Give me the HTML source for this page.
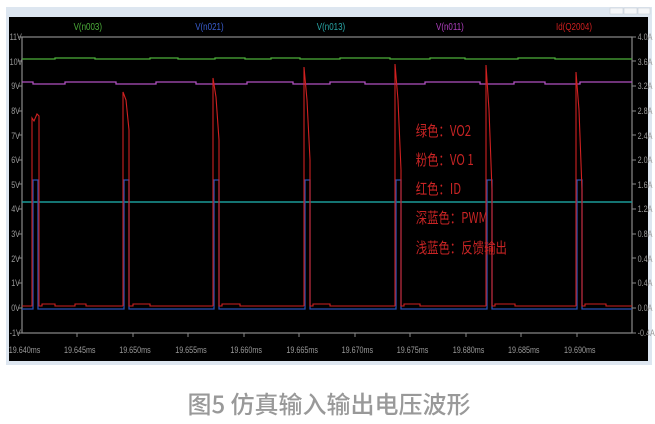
<!DOCTYPE html>
<html><head><meta charset="utf-8"><style>
body{margin:0;width:655px;height:424px;background:#fff;overflow:hidden;font-family:"Liberation Sans","Noto Sans CJK SC",sans-serif}
</style></head><body>
<svg width="655" height="424" viewBox="0 0 655 424" xmlns="http://www.w3.org/2000/svg" style="position:absolute;left:0;top:0">
<rect x="6" y="7" width="646" height="358" fill="#dde6f0"/>
<rect x="9" y="17" width="639" height="344" fill="#000"/>
<rect x="610" y="8" width="13" height="6" fill="#f4f6f8" stroke="#c8d0d8" stroke-width="0.6"/>
<rect x="624" y="8" width="13" height="6" fill="#f4f6f8" stroke="#c8d0d8" stroke-width="0.6"/>
<rect x="638" y="8" width="12" height="6" fill="#f4f6f8" stroke="#c8d0d8" stroke-width="0.6"/>
<rect x="22" y="37" width="610" height="296" fill="none" stroke="#8a8a8a" stroke-width="1.2"/>
<g font-family="Liberation Sans Narrow,Liberation Sans,sans-serif" font-size="9" fill="#9a9a9a" transform="scale(0.8,1)">
<text x="12" y="40">11V</text><text x="12" y="65">10V</text><text x="14" y="89">9V</text><text x="14" y="114">8V</text><text x="14" y="139">7V</text><text x="14" y="163">6V</text><text x="14" y="188">5V</text><text x="14" y="212">4V</text><text x="14" y="237">3V</text><text x="14" y="262">2V</text><text x="14" y="286">1V</text><text x="14" y="311">0V</text><text x="12" y="336">-1V</text>
<text x="797" y="40">4.0A</text><text x="797" y="65">3.6A</text><text x="797" y="89">3.2A</text><text x="797" y="114">2.8A</text><text x="797" y="139">2.4A</text><text x="797" y="163">2.0A</text><text x="797" y="188">1.6A</text><text x="797" y="212">1.2A</text><text x="797" y="237">0.8A</text><text x="797" y="262">0.4A</text><text x="797" y="286">0.4A</text><text x="797" y="311">0.0A</text><text x="797" y="336">-0.4A</text>
<text x="11" y="353">19.640ms</text><text x="80" y="353">19.645ms</text><text x="149" y="353">19.650ms</text><text x="219" y="353">19.655ms</text><text x="288" y="353">19.660ms</text><text x="358" y="353">19.665ms</text><text x="427" y="353">19.670ms</text><text x="496" y="353">19.675ms</text><text x="566" y="353">19.680ms</text><text x="635" y="353">19.685ms</text><text x="705" y="353">19.690ms</text>
</g>
<g stroke="#8a8a8a" stroke-width="1">
<path d="M18 37h4M18 61h4M18 86h4M18 111h4M18 135h4M18 160h4M18 184h4M18 209h4M18 234h4M18 258h4M18 283h4M18 308h4M18 333h4"/>
<path d="M632 37h4M632 61h4M632 86h4M632 111h4M632 135h4M632 160h4M632 184h4M632 209h4M632 234h4M632 258h4M632 283h4M632 308h4M632 333h4"/>
<path d="M77 333v4M133 333v4M188 333v4M244 333v4M299 333v4M355 333v4M410 333v4M466 333v4M521 333v4M577 333v4"/>
</g>
<g font-family="Liberation Sans Narrow,Liberation Sans,sans-serif" font-size="10" transform="scale(0.8,1)">
<text x="92" y="30" fill="#4caf3a">V(n003)</text>
<text x="244" y="30" fill="#3a5ed0">V(n021)</text>
<text x="396" y="30" fill="#2aa8a8">V(n013)</text>
<text x="545" y="30" fill="#b040c0">V(n011)</text>
<text x="695" y="30" fill="#d02020">Id(Q2004)</text>
</g>
<path d="M22 59H55V58H95V59H150V58H178V59H215V58H245V59H271V58H300V59H340V58H390V59H430V58H465V59H518V58H555V59H632" stroke="#4caf3a" stroke-width="1.3" fill="none"/>
<path d="M22 82H33V84H65V82H116V84H156V82H196V84H247V82H293V84H330V82H365V84H425V82H480V84H514V82H545V84H580V82H632" stroke="#b050c0" stroke-width="1.3" fill="none"/>
<line x1="22" y1="202" x2="632" y2="202" stroke="#1a9a98" stroke-width="1.4"/>
<g stroke="#2850b0" stroke-width="1.3" fill="none">
<path d="M22 309H33V180H38V309H124V180H129V309H214V180H219V309H305V180H310V309H396V180H401V309H487V180H492V309H577V180H582V309H632"/>
</g>
<g stroke="#d02020" stroke-width="1.1" fill="none">
<path d="M22 306H32V118L34 121L37 114L39 116V306H42V304H55V306H75V304H86V306H123"/>
<path d="M123 306V92L126 100L129 130V306H133V304H150V306H213"/>
<path d="M213 306V78L216 97L219 140V306H222V304H240V306H304"/>
<path d="M304 306V67L307 100L310 160V306H313V304H330V306H395"/>
<path d="M395 306V64L398 100L401 170V306H404V304H420V306H486"/>
<path d="M486 306V65L489 110L492 190V306H495V304H515V306H576"/>
<path d="M576 306V72L579 110L582 190V306H585V304H606V306H632"/>
</g>
<g font-family="Liberation Sans Narrow,'Noto Sans CJK SC',sans-serif" font-size="15" fill="#c82424" transform="scale(0.76,1)">
<text x="547" y="136">绿色：VO2</text>
<text x="547" y="165">粉色：VO 1</text>
<text x="547" y="194">红色：ID</text>
<text x="547" y="223">深蓝色：PWM</text>
<text x="547" y="253">浅蓝色：反馈输出</text>
</g>
<text x="329" y="413" text-anchor="middle" font-family="'Noto Sans CJK SC',sans-serif" font-weight="500" font-size="24" fill="#999">图5 仿真输入输出电压波形</text>
</svg>
</body></html>
